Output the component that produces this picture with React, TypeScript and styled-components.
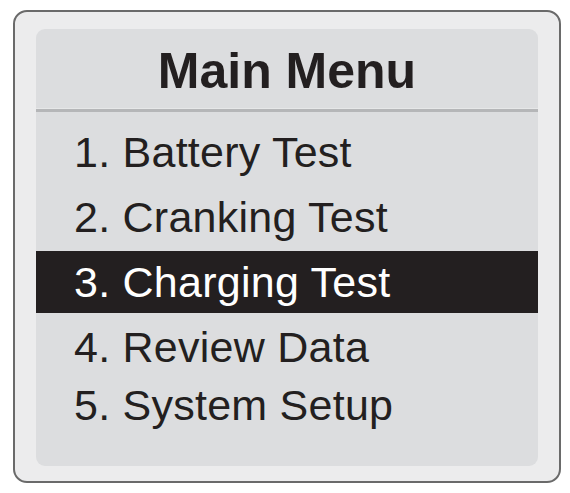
import React from "react";
import styled, { createGlobalStyle } from "styled-components";

const GlobalStyle = createGlobalStyle`
  html, body {
    margin: 0;
    padding: 0;
    background: #ffffff;
  }
  body {
    font-family: "Liberation Sans", Arial, Helvetica, sans-serif;
  }
`;

const Page = styled.div`
  width: 570px;
  height: 493px;
  padding: 10px 0 0 13px;
  box-sizing: border-box;
`;

const Frame = styled.div`
  width: 548px;
  height: 473px;
  box-sizing: border-box;
  border: 2px solid #6a6a6a;
  border-radius: 14px;
  background: #ececed;
  padding: 17px 21px 15px 21px;
  display: flex;
`;

const Screen = styled.div`
  flex: 1;
  background: #dcdddf;
  border-radius: 9px;
  display: flex;
  flex-direction: column;
  overflow: hidden;
`;

const Header = styled.div`
  height: 79px;
  box-sizing: border-box;
  padding-top: 17px;
  text-align: center;
  font-weight: 700;
  font-size: 50px;
  line-height: 50px;
  color: #231f20;
`;

const Divider = styled.div`
  height: 3px;
  border-top: 1px solid #e6e7e8;
  background: #b5b6b8;
`;

const List = styled.ul`
  list-style: none;
  margin: 0;
  padding: 9px 0 0 0;
  display: flex;
  flex-direction: column;
  gap: 3px;
`;

const Row = styled.li<{ $active?: boolean; $shift?: number }>`
  height: 62px;
  line-height: 62px;
  padding-left: 38px;
  font-size: 43px;
  letter-spacing: 0.25px;
  white-space: nowrap;
  color: ${(p) => (p.$active ? "#ffffff" : "#231f20")};
  background: ${(p) => (p.$active ? "#231f20" : "transparent")};
  margin-top: ${(p) => (p.$shift ? `${p.$shift}px` : "0")};
`;

const items = [
  { label: "1. Battery Test" },
  { label: "2. Cranking Test" },
  { label: "3. Charging Test", active: true },
  { label: "4. Review Data" },
  { label: "5. System Setup", shift: -7 },
];

export default function App() {
  return (
    <>
      <GlobalStyle />
      <Page>
        <Frame>
          <Screen>
            <Header>Main Menu</Header>
            <Divider />
            <List>
              {items.map((it) => (
                <Row key={it.label} $active={it.active} $shift={it.shift}>
                  {it.label}
                </Row>
              ))}
            </List>
          </Screen>
        </Frame>
      </Page>
    </>
  );
}
